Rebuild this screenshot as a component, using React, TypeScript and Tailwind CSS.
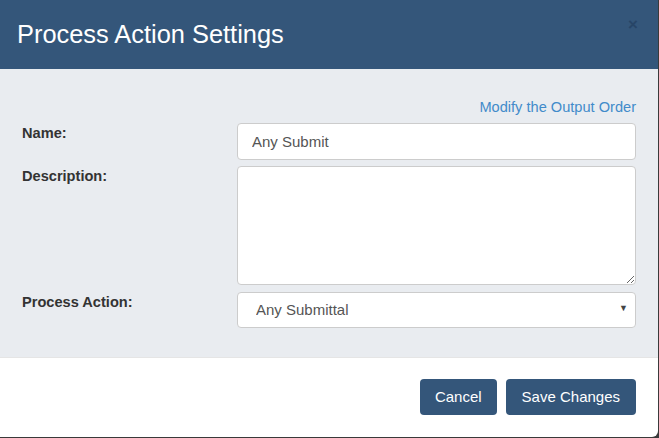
const App = () => {
  return (
    <div className="h-[438px] w-[659px] bg-[#3a3a3a] font-['Liberation_Sans',Arial,sans-serif]">
      <div className="flex h-[437px] w-[658px] flex-col overflow-hidden rounded-br-[6px] bg-white">
        {/* Header */}
        <div className="relative flex h-[69px] items-center bg-[#34567a] pl-[17px]">
          <h4 className="text-[25.4px] leading-none text-white">
            Process Action Settings
          </h4>
          <button className="absolute top-[16px] right-[20px] text-[17px] font-bold leading-none text-[#1f3a5c] opacity-60">
            ×
          </button>
        </div>

        {/* Body */}
        <div className="flex h-[288px] flex-col bg-[#e9ecf0] pt-[28px] pr-[22px] pl-[22px]">
          <div className="flex justify-end">
            <a className="text-[14.6px] leading-5 text-[#428bca]" href="#">
              Modify the Output Order
            </a>
          </div>

          {/* Name */}
          <div className="mt-[6px] flex">
            <label className="w-[215px] text-[14.6px] font-bold leading-5 text-[#333]">
              Name:
            </label>
            <input
              className="h-[37px] flex-1 rounded-[4px] border border-[#ccc] bg-white px-[14px] text-[15px] text-[#555] outline-none"
              defaultValue="Any Submit"
            />
          </div>

          {/* Description */}
          <div className="mt-[6px] flex">
            <label className="w-[215px] text-[14.6px] font-bold leading-5 text-[#333]">
              Description:
            </label>
            <textarea className="h-[119px] flex-1 rounded-[4px] border border-[#ccc] bg-white px-[14px] py-2 text-[15px] text-[#555] outline-none" />
          </div>

          {/* Process Action */}
          <div className="mt-[7px] flex">
            <label className="w-[215px] text-[14.6px] font-bold leading-5 text-[#333]">
              Process Action:
            </label>
            <div className="relative flex-1">
              <select className="h-[36px] w-full appearance-none rounded-[4px] border border-[#ccc] bg-white pl-[18px] text-[15px] text-[#555] outline-none">
                <option>Any Submittal</option>
              </select>
              <span className="pointer-events-none absolute top-[12px] right-[8px] text-[9px] leading-none text-[#444]">
                ▼
              </span>
            </div>
          </div>
        </div>

        {/* Footer */}
        <div className="flex flex-1 justify-end gap-[9px] border-t border-[#e5e5e5] pt-[21px] pr-[22px]">
          <button className="h-[36px] rounded-[4px] bg-[#34567a] px-[15px] pt-[1px] text-[15px] text-white">
            Cancel
          </button>
          <button className="h-[36px] rounded-[4px] bg-[#34567a] px-[16px] pt-[1px] text-[15px] text-white">
            Save Changes
          </button>
        </div>
      </div>
    </div>
  );
};

export default App;
